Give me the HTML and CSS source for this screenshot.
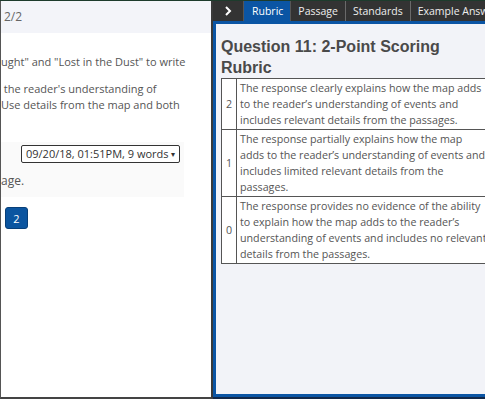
FILE: index.html
```html
<!DOCTYPE html>
<html lang="en">

<head>
    <meta charset="UTF-8">
    <meta name="viewport" content="width=device-width, initial-scale=1.0">
    <title>Scoring</title>
    <link rel="stylesheet" href="styles.css">
</head>

<body>
    <div class="screen">
        <div class="response-pane">
            <div class="pane-header">2/2</div>
            <div class="prompt">
                <p>ught" and "Lost in the Dust" to write</p>
                <p> the reader's understanding of<br>Use details from the map and both</p>
            </div>
            <div class="answer-box">
                <div class="version-row">
                    <div class="version-select">09/20/18, 01:51PM, 9 words <span class="caret">&#9662;</span></div>
                </div>
                <div class="answer-text">age.</div>
            </div>
            <div class="pager">
                <button class="page-button">2</button>
            </div>
        </div>

        <div class="rubric-pane">
            <div class="tab-bar">
                <div class="tab toggle">
                    <svg width="10" height="10" viewBox="0 0 10 10">
                        <path d="M3 1 L7 5 L3 9" fill="none" stroke="#fff" stroke-width="2"/>
                    </svg>
                </div>
                <div class="tab active">Rubric</div>
                <div class="tab">Passage</div>
                <div class="tab">Standards</div>
                <div class="tab">Example Answers</div>
            </div>
            <div class="rubric-body">
                <h2>Question 11: 2-Point Scoring Rubric</h2>
                <table class="rubric-table">
                    <tr>
                        <td class="score">2</td>
                        <td>The response clearly explains how the map adds<br>to the reader’s understanding of events and<br>includes relevant details from the passages.</td>
                    </tr>
                    <tr>
                        <td class="score">1</td>
                        <td>The response partially explains how the map<br>adds to the reader’s understanding of events and<br>includes limited relevant details from the<br>passages.</td>
                    </tr>
                    <tr>
                        <td class="score">0</td>
                        <td>The response provides no evidence of the ability<br>to explain how the map adds to the reader’s<br>understanding of events and includes no relevant<br>details from the passages.</td>
                    </tr>
                </table>
            </div>
        </div>
    </div>
</body>

</html>
```

FILE: styles.css
```css
body {
    margin: 0;
    padding: 0;
    font-family: "Open Sans", sans-serif;
    background-color: #ffffff;
    overflow: hidden;
}

.screen {
    display: flex;
    height: 399px;
    border-top: 1px solid #1d3b2c;
    box-sizing: border-box;
}

/* Left side: student response */
.response-pane {
    width: 213px;
    flex: none;
    border-left: 1px solid #555555;
    border-bottom: 2px solid #444444;
    border-right: 2px solid #3a3a3a;
    box-sizing: border-box;
    overflow: hidden;
    color: #555555;
    font-size: 11px;
}

.pane-header {
    background-color: #f3f4f9;
    height: 32px;
    line-height: 32px;
    padding-left: 3px;
    color: #666666;
    font-size: 12px;
}

.prompt {
    padding-top: 21px;
    white-space: nowrap;
}

.prompt p {
    margin: 0 0 11px 0;
    line-height: 16px;
    white-space: pre;
}

.answer-box {
    margin-top: 29px;
    width: 183px;
    background-color: #fafafa;
    padding: 3px 0 8px 0;
}

.version-row {
    display: flex;
    justify-content: flex-end;
    padding-right: 4px;
}

.version-select {
    border: 1px solid #333333;
    border-radius: 2px;
    background-color: #ffffff;
    color: #333333;
    font-size: 11px;
    line-height: 16px;
    padding: 0 4px 0 4px;
    width: 149px;
}

.caret {
    font-size: 8px;
    float: right;
}

.answer-text {
    margin-top: 9px;
    font-size: 12px;
    color: #555555;
}

.pager {
    padding: 10px 0 0 4px;
}

.page-button {
    background-color: #0b55a0;
    color: #ffffff;
    border: 1px solid #083f78;
    border-radius: 3px;
    width: 23px;
    height: 22px;
    font-family: "Open Sans", sans-serif;
    font-size: 11px;
    padding: 0;
}

/* Right side: rubric */
.rubric-pane {
    flex: 1;
    display: flex;
    flex-direction: column;
    min-width: 0;
    border-bottom: 2px solid #13294a;
}

.tab-bar {
    display: flex;
    background-color: #333333;
    height: 20px;
    flex: none;
    white-space: nowrap;
    overflow: hidden;
}

.tab {
    flex: none;
    color: #eeeeee;
    font-size: 10.5px;
    line-height: 20px;
    padding: 0 7px;
    border-right: 1px solid #6a6a6a;
}

.tab.toggle {
    width: 16px;
    display: flex;
    align-items: center;
    justify-content: center;
    border-right: 1px solid #555555;
}

.tab.active {
    background-color: #0b55a4;
    color: #ffffff;
    padding: 0 7px 0 8px;
    border-right: 1px solid #555555;
}

.rubric-body {
    flex: 1;
    background-color: #f2f3f8;
    border-top: 3px solid #0b55a4;
    border-left: 3px solid #0b55a4;
    border-bottom: 3px solid #0b55a4;
    padding: 12px 0 0 5px;
    overflow: hidden;
}

.rubric-body h2 {
    font-family: "Liberation Sans", Arial, sans-serif;
    font-size: 16px;
    font-weight: bold;
    color: #4a4a4a;
    margin: 0;
    line-height: 21px;
}

.rubric-table {
    border-collapse: collapse;
    background-color: #ffffff;
    color: #555555;
    font-size: 10.7px;
}

.rubric-table td {
    border: 1px solid #555555;
    padding: 1px 8px 1px 3px;
    line-height: 16px;
    vertical-align: middle;
    white-space: nowrap;
}

.rubric-table td.score {
    min-width: 10px;
    padding: 0 2px;
    text-align: center;
}
```
